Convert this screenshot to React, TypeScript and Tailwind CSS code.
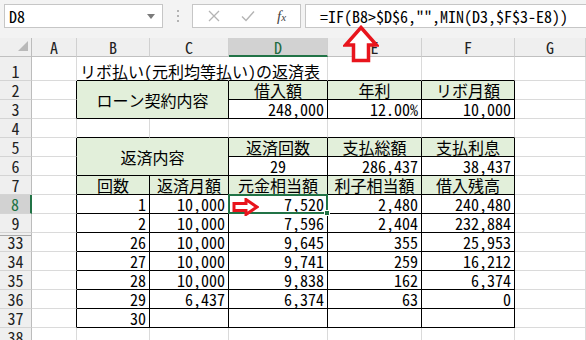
import React from "react";

type Cell = { t: string; a: "l" | "c" | "r"; g?: boolean };

const COLS = ["A", "B", "C", "D", "E", "F", "G"];
const ROWS = [1, 2, 3, 4, 5, 6, 7, 8, 9, 33, 34, 35, 36, 37, 38];

const body: [number, string, string, string, string, string][] = [
  [8, "1", "10,000", "7,520", "2,480", "240,480"],
  [9, "2", "10,000", "7,596", "2,404", "232,884"],
  [33, "26", "10,000", "9,645", "355", "25,953"],
  [34, "27", "10,000", "9,741", "259", "16,212"],
  [35, "28", "10,000", "9,838", "162", "6,374"],
  [36, "29", "6,437", "6,374", "63", "0"],
  [37, "30", "", "", "", ""],
];

const content: Record<number, Record<number, Cell>> = {
  1: { 2: { t: "リボ払い(元利均等払い)の返済表", a: "l" } },
  2: {
    2: { t: "ローン契約内容", a: "c", g: true },
    4: { t: "借入額", a: "c", g: true },
    5: { t: "年利", a: "c", g: true },
    6: { t: "リボ月額", a: "c", g: true },
  },
  3: {
    4: { t: "248,000", a: "r" },
    5: { t: "12.00%", a: "r" },
    6: { t: "10,000", a: "r" },
  },
  5: {
    2: { t: "返済内容", a: "c", g: true },
    4: { t: "返済回数", a: "c", g: true },
    5: { t: "支払総額", a: "c", g: true },
    6: { t: "支払利息", a: "c", g: true },
  },
  6: {
    4: { t: "29", a: "c" },
    5: { t: "286,437", a: "r" },
    6: { t: "38,437", a: "r" },
  },
  7: {
    2: { t: "回数", a: "c", g: true },
    3: { t: "返済月額", a: "c", g: true },
    4: { t: "元金相当額", a: "c", g: true },
    5: { t: "利子相当額", a: "c", g: true },
    6: { t: "借入残高", a: "c", g: true },
  },
};

body.forEach(([r, ...vals]) => {
  content[r] = {};
  vals.forEach((v, i) => {
    content[r][i + 2] = { t: v, a: "r" };
  });
});

const inTable = (r: number, c: number) =>
  c >= 2 && c <= 6 && ((r >= 2 && r <= 3) || (r >= 5 && r <= 37));

const nextRow = (r: number) => ROWS[ROWS.indexOf(r) + 1] ?? 0;

const covered = (r: number, c: number) =>
  ((r === 2 || r === 5) && c === 3) || ((r === 3 || r === 6) && (c === 2 || c === 3));

function FormulaBar() {
  return (
    <div className="flex h-[38px] items-start bg-[#f3f3f3] pt-[4px]">
      <div className="ml-[4px] flex h-[24px] w-[159px] items-center justify-between border border-[#c6c6c6] bg-white pl-[4px] pr-[7px]">
        <span className="leading-[20px]">D8</span>
        <svg width="8" height="5" viewBox="0 0 8 5">
          <path d="M0 0h8L4 5z" fill="#7b7b7b" />
        </svg>
      </div>
      <div className="flex h-[24px] w-[29px] flex-col items-center justify-center gap-[3px]">
        <span className="h-[2px] w-[2px] bg-[#b3b3b3]" />
        <span className="h-[2px] w-[2px] bg-[#b3b3b3]" />
        <span className="h-[2px] w-[2px] bg-[#b3b3b3]" />
      </div>
      <div className="flex h-[24px] w-[109px] items-center border border-[#c6c6c6] bg-white">
        <svg className="ml-[15px]" width="12" height="12" viewBox="0 0 12 12">
          <path d="M1 1L11 11M11 1L1 11" stroke="#b4b4b4" strokeWidth="1.3" />
        </svg>
        <svg className="ml-[21px]" width="14" height="12" viewBox="0 0 14 12">
          <path d="M1 6.5L5 10.5L13 1.5" stroke="#b4b4b4" strokeWidth="1.4" fill="none" />
        </svg>
        <span className="ml-[22px] font-['Liberation_Serif',serif] text-[15px] italic text-[#444]">
          f<span className="text-[11px]">x</span>
        </span>
      </div>
      <div className="-mr-2 ml-[4px] flex h-[24px] flex-1 items-center border border-[#c6c6c6] bg-white pl-[14px] whitespace-nowrap">
        =IF(B8&gt;$D$6,"",MIN(D3,$F$3-E8))
      </div>
    </div>
  );
}

function RowHead({ r }: { r: number }) {
  const sel = r === 8;
  return (
    <div
      className={`flex items-end justify-center border-b border-b-[#d4d4d4] leading-[18px] ${
        sel
          ? "border-r-2 border-r-[#217346] bg-[#d2d2d2] text-[#217346]"
          : "border-r border-r-[#bcbcbc] bg-[#efefef] text-[#222]"
      } ${r === 9 ? "border-b-[#a8a8a8]" : ""} ${
        r === 33 ? "shadow-[inset_0_2px_0_#efefef,inset_0_3px_0_#a8a8a8]" : ""
      }`}
    >
      {r}
    </div>
  );
}

function SheetCell({ r, c }: { r: number; c: number }) {
  if (covered(r, c)) return null;
  const merged = (r === 2 || r === 5) && c === 2;
  const cell = content[r]?.[c];
  const right =
    r === 1 && (c === 2 || c === 3)
      ? "border-r-transparent"
      : merged || inTable(r, c) || inTable(r, c + 1)
      ? "border-r-black"
      : "border-r-[#dadada]";
  const bottom =
    merged || inTable(r, c) || inTable(nextRow(r), c) ? "border-b-black" : "border-b-[#dadada]";
  const align =
    cell?.a === "r" ? "justify-end pr-[3px]" : cell?.a === "c" ? "justify-center" : "justify-start pl-[3px]";
  const isSel = r === 8 && c === 4;
  return (
    <div
      className={`relative flex whitespace-nowrap border-b border-r ${right} ${bottom} ${align} ${
        merged ? "col-span-2 row-span-2 items-center" : "items-end"
      } ${cell?.g ? "bg-[#e2efda]" : ""} leading-[18px]`}
    >
      {cell?.t}
      {isSel && (
        <>
          <div className="pointer-events-none absolute -bottom-[1px] -left-[1px] -right-[1px] -top-[1px] z-10 border-2 border-[#217346]">
            <div className="absolute -bottom-[4px] -right-[4px] h-[6px] w-[6px] border border-white bg-[#217346]" />
          </div>
          <svg className="absolute left-[3px] top-[3px] z-20" width="27" height="18" viewBox="0 0 27 18">
            <path
              d="M2 5.5H14V1.5L25 9L14 16.5V12.5H2Z"
              fill="white"
              stroke="#e8141c"
              strokeWidth="3"
              strokeLinejoin="miter"
            />
          </svg>
        </>
      )}
    </div>
  );
}

function Sheet() {
  return (
    <div className="grid grid-cols-[32px_45px_73px_79px_99px_94px_93px_1fr] grid-rows-[19px_24px_repeat(14,19px)]">
      <div className="relative border-b border-r border-b-[#c0c0c0] border-r-[#bcbcbc] bg-[#efefef]">
        <svg className="absolute bottom-[5px] right-[3px]" width="10" height="10" viewBox="0 0 10 10">
          <path d="M10 0V10H0Z" fill="#b9b9b9" />
        </svg>
      </div>
      {COLS.map((col) => (
        <div
          key={col}
          className={`flex items-center justify-center leading-[18px] ${
            col === "D"
              ? "border-b-2 border-r border-b-[#217346] border-r-[#d0d0d0] bg-[#d2d2d2] text-[#1f6b41]"
              : "border-b border-r border-b-[#c0c0c0] border-r-[#d0d0d0] bg-[#efefef] text-[#222]"
          }`}
        >
          {col}
        </div>
      ))}
      {ROWS.map((r) => (
        <React.Fragment key={r}>
          <RowHead r={r} />
          {COLS.map((_, i) => (
            <SheetCell key={i} r={r} c={i + 1} />
          ))}
        </React.Fragment>
      ))}
    </div>
  );
}

export default function App() {
  return (
    <div className="relative h-[340px] w-[586px] overflow-hidden bg-white text-[16px] text-black font-[family-name:'Noto_Sans_Mono_CJK_JP','Noto_Sans_CJK_JP',sans-serif]">
      <FormulaBar />
      <Sheet />
      <svg className="absolute left-[343px] top-[25px] z-30" width="36" height="38" viewBox="0 0 36 38">
        <path
          d="M18 2.5L33.5 20H25.5V35.5H10.5V20H2.5Z"
          fill="white"
          stroke="#e8141c"
          strokeWidth="3.5"
          strokeLinejoin="miter"
        />
      </svg>
    </div>
  );
}
